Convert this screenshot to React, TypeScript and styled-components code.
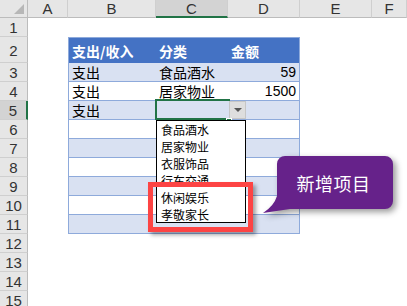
import React from "react";
import styled, { createGlobalStyle, css } from "styled-components";

const Global = createGlobalStyle`
  html, body { margin: 0; padding: 0; background: #fff; overflow: hidden; }
  #root { width: 407px; height: 306px; overflow: hidden; }
`;

const CJK = `"Noto Sans CJK SC", "Noto Sans", sans-serif`;
const LATIN = `"Liberation Sans", Arial, sans-serif`;

const Sheet = styled.div`
  position: relative;
  width: 407px;
  height: 306px;
  overflow: hidden;
  display: grid;
  grid-template-columns: 28px 40px 88px 72px 72px 72px 1fr;
  grid-template-rows: 18px 19px 26px repeat(13, 19px);
  font-family: ${CJK};
  color: #000;
`;

const Corner = styled.div`
  position: relative;
  background: #e6e6e6;
  border-right: 1px solid #bcbcbc;
  border-bottom: 1px solid #bcbcbc;
  box-sizing: border-box;
  &::after {
    content: "";
    position: absolute;
    right: 3px;
    bottom: 3px;
    width: 0;
    height: 0;
    border-left: 10px solid transparent;
    border-bottom: 10px solid #b7b7b7;
  }
`;

const ColHead = styled.div<{ $active?: boolean }>`
  box-sizing: border-box;
  display: flex;
  align-items: center;
  justify-content: center;
  font-family: ${LATIN};
  font-size: 15px;
  color: #333;
  background: ${(p) => (p.$active ? "#d3d3d3" : "#e6e6e6")};
  border-right: 1px solid #cfcfcf;
  border-bottom: ${(p) => (p.$active ? "2px solid #217346" : "1px solid #bcbcbc")};
`;

const RowHead = styled.div<{ $active?: boolean }>`
  box-sizing: border-box;
  display: flex;
  align-items: center;
  justify-content: center;
  font-family: ${LATIN};
  font-size: 15px;
  color: #333;
  padding-top: 1px;
  background: ${(p) => (p.$active ? "#d3d3d3" : "#e6e6e6")};
  border-bottom: 1px solid #cfcfcf;
  border-right: ${(p) => (p.$active ? "2px solid #217346" : "1px solid #bcbcbc")};
`;

const Blank = styled.div``;

const HeadCell = styled.div<{ $first?: boolean; $last?: boolean }>`
  box-sizing: border-box;
  display: flex;
  align-items: center;
  padding: 1px 0 0 3px;
  background: #4472c4;
  color: #fff;
  font-weight: bold;
  font-size: 14px;
  white-space: nowrap;
  border-top: 1px solid #8eaadb;
  ${(p) => p.$first && css`border-left: 1px solid #8eaadb;`}
  ${(p) => p.$last && css`border-right: 1px solid #8eaadb;`}
`;

const DataCell = styled.div<{
  $band?: boolean;
  $first?: boolean;
  $last?: boolean;
  $num?: boolean;
  $selected?: boolean;
}>`
  position: relative;
  box-sizing: border-box;
  display: flex;
  align-items: flex-end;
  justify-content: ${(p) => (p.$num ? "flex-end" : "flex-start")};
  padding: 0 ${(p) => (p.$num ? "3px" : "0")} 0 ${(p) => (p.$num ? "0" : "3px")};
  background: ${(p) => (p.$band ? "#d9e1f2" : "#fff")};
  font-family: ${(p) => (p.$num ? LATIN : CJK)};
  font-size: 14px;
  line-height: 18px;
  white-space: nowrap;
  border-bottom: 1px solid #8eaadb;
  ${(p) => p.$first && css`border-left: 1px solid #8eaadb;`}
  ${(p) => p.$last && css`border-right: 1px solid #8eaadb;`}
  ${(p) =>
    p.$selected &&
    css`
      &::after {
        content: "";
        position: absolute;
        left: -1px;
        top: -2px;
        right: -2px;
        bottom: -1px;
        border: 2px solid #217346;
        pointer-events: none;
      }
    `}
`;

const DropButton = styled.div`
  position: absolute;
  left: 229px;
  top: 101px;
  width: 17px;
  height: 18px;
  box-sizing: border-box;
  background: #dedede;
  border: 1px solid #c6c6c6;
  display: flex;
  align-items: center;
  justify-content: center;
  &::before {
    content: "";
    width: 0;
    height: 0;
    border-left: 4px solid transparent;
    border-right: 4px solid transparent;
    border-top: 4px solid #555;
  }
`;

const Handle = styled.div`
  position: absolute;
  left: 226px;
  top: 118px;
  width: 4px;
  height: 4px;
  background: #217346;
  border: 1px solid #fff;
`;

const List = styled.div`
  position: absolute;
  left: 156px;
  top: 120px;
  width: 90px;
  height: 103px;
  box-sizing: border-box;
  background: #fff;
  border: 1px solid #000;
  display: flex;
  flex-direction: column;
`;

const ListItem = styled.div`
  height: 17px;
  line-height: 17px;
  padding-left: 4px;
  font-size: 12px;
  font-family: ${CJK};
  color: #000;
  white-space: nowrap;
`;

const RedBox = styled.div`
  position: absolute;
  left: 148px;
  top: 182px;
  width: 105px;
  height: 50px;
  box-sizing: border-box;
  border: 5px solid #fd4444;
  box-shadow: 3px 3px 4px rgba(0, 0, 0, 0.35);
`;

const Callout = styled.div`
  position: absolute;
  left: 277px;
  top: 156px;
  width: 116px;
  height: 53px;
  display: flex;
  align-items: center;
  justify-content: center;
`;

const CalloutShape = styled.svg`
  position: absolute;
  left: -17px;
  top: -4px;
  overflow: visible;
  filter: drop-shadow(3px 3px 3px rgba(0, 0, 0, 0.4));
`;

const CalloutText = styled.span`
  position: relative;
  color: #fff;
  font-family: ${CJK};
  font-size: 18px;
  letter-spacing: 0.5px;
  margin-left: -3px;
`;

const cols = ["A", "B", "C", "D", "E", "F"];

type Row = { b?: string; c?: string; d?: string };
const rows: Row[] = [
  { b: "支出", c: "食品酒水", d: "59" },
  { b: "支出", c: "居家物业", d: "1500" },
  { b: "支出" },
  {},
  {},
  {},
  {},
  {},
  {},
];

const items = ["食品酒水", "居家物业", "衣服饰品", "行车交通", "休闲娱乐", "孝敬家长"];

export default function App() {
  return (
    <>
      <Global />
      <Sheet>
        <Corner />
        {cols.map((c) => (
          <ColHead key={c} $active={c === "C"}>
            {c}
          </ColHead>
        ))}

        <RowHead>1</RowHead>
        {cols.map((c) => (
          <Blank key={"r1" + c} />
        ))}

        <RowHead>2</RowHead>
        <Blank />
        <HeadCell $first>支出/收入</HeadCell>
        <HeadCell>分类</HeadCell>
        <HeadCell $last>金额</HeadCell>
        <Blank />
        <Blank />

        {rows.map((r, i) => {
          const n = i + 3;
          const band = n % 2 === 1;
          return (
            <React.Fragment key={n}>
              <RowHead $active={n === 5}>{n}</RowHead>
              <Blank />
              <DataCell $band={band} $first>
                {r.b}
              </DataCell>
              <DataCell $band={band} $selected={n === 5}>
                {r.c}
              </DataCell>
              <DataCell $band={band} $last $num>
                {r.d}
              </DataCell>
              <Blank />
              <Blank />
            </React.Fragment>
          );
        })}

        {[12, 13, 14, 15].map((n) => (
          <React.Fragment key={n}>
            <RowHead>{n}</RowHead>
            {cols.map((c) => (
              <Blank key={n + c} />
            ))}
          </React.Fragment>
        ))}

        <DropButton />
        <Handle />
        <List>
          {items.map((t) => (
            <ListItem key={t}>{t}</ListItem>
          ))}
        </List>
        <RedBox />
        <Callout>
          <CalloutShape width="140" height="66" viewBox="0 0 140 66">
            <path
              d="M25,4 H125 A8,8 0 0 1 133,12 V49 A8,8 0 0 1 125,57 H30 L3,61 Q14,54 17,44 V12 A8,8 0 0 1 25,4 Z"
              fill="#66228a"
            />
          </CalloutShape>
          <CalloutText>新增项目</CalloutText>
        </Callout>
      </Sheet>
    </>
  );
}
